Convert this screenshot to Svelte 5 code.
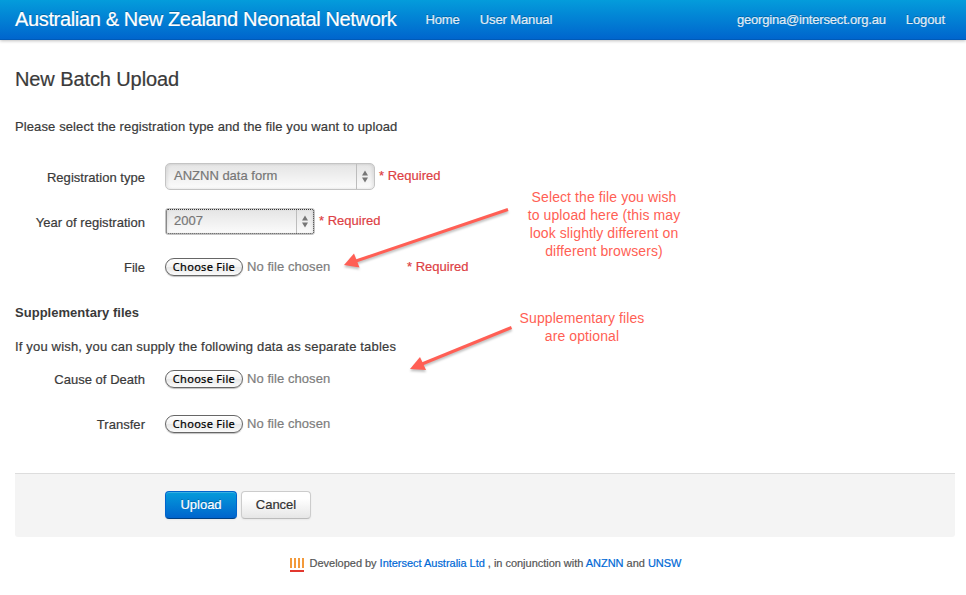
<script>
  const required = [
    { label: 'Registration type', value: 'ANZNN data form', width: 210, focused: false },
    { label: 'Year of registration', value: '2007', width: 150, focused: true }
  ];
  const supplementary = ['Cause of Death', 'Transfer'];
</script>

{#snippet fileInput()}
  <button class="choose" type="button">Choose File</button>
  <span class="nofile">No file chosen</span>
{/snippet}

<div class="page">
  <nav>
    <a class="brand" href="#top">Australian &amp; New Zealand Neonatal Network</a>
    <a class="home" href="#home">Home</a>
    <a class="manual" href="#manual">User Manual</a>
    <a class="user" href="#user">georgina@intersect.org.au</a>
    <a class="logout" href="#logout">Logout</a>
  </nav>

  <main>
    <h1>New Batch Upload</h1>
    <p class="intro">Please select the registration type and the file you want to upload</p>

    {#each required as field}
      <div class="row">
        <span class="label">{field.label}</span>
        <div class="select" class:focused={field.focused} style:width="{field.width}px">
          <span class="value">{field.value}</span>
          <svg class="steppers" width="18" height="25" viewBox="0 0 18 25">
            <path d="M.5 0v25" stroke="#bdbdbd" />
            <path d="M6 11.500l3-5 3 5zM6 13.500h6l-3 5z" fill="#777" />
          </svg>
        </div>
        <span class="required">* Required</span>
      </div>
    {/each}
    <div class="row">
      <span class="label">File</span>
      <div class="file">{@render fileInput()}</div>
      <span class="required low">* Required</span>
    </div>

    <h2>Supplementary files</h2>
    <p class="note">If you wish, you can supply the following data as separate tables</p>
    {#each supplementary as label}
      <div class="row">
        <span class="label">{label}</span>
        <div class="file">{@render fileInput()}</div>
      </div>
    {/each}

    <div class="actions">
      <button class="btn primary" type="button">Upload</button>
      <button class="btn" type="button">Cancel</button>
    </div>
  </main>

  <footer>
    <svg width="14" height="14" viewBox="0 0 14 14">
      <path d="M1 0v10M5 0v10M9 0v10M13 0v10" stroke="#f39a3b" stroke-width="2" />
      <path d="M0 13h14" stroke="#e2382f" stroke-width="2" />
    </svg>
    <span>Developed by <a href="#intersect">Intersect Australia Ltd</a> , in conjunction with <a href="#anznn">ANZNN</a> and <a href="#unsw">UNSW</a></span>
  </footer>

  <svg class="arrows" width="966" height="595" viewBox="0 0 966 595">
    <g fill="#ff5f55" stroke="#ff5f55">
      <path d="M508 209.500L356 261" stroke-width="3" />
      <path d="M344 265L354 253.500L359.500 267.500z" stroke="none" />
      <path d="M511.500 327.500L422 364" stroke-width="3" />
      <path d="M410 369L420 357L426 370z" stroke="none" />
    </g>
  </svg>
  <div class="callout first">Select the file you wish<br />to upload here (this may<br />look slightly different on<br />different browsers)</div>
  <div class="callout second">Supplementary files<br />are optional</div>
</div>

<style>
  :global(body) { background: #fff; }
  .page {
    position: relative;
    width: 966px;
    height: 595px;
    overflow: hidden;
    font: 13px/18px "Liberation Sans", Arial, sans-serif;
    color: #3a3a3a;
    white-space: nowrap;
    -webkit-text-stroke: .2px;
  }
  nav {
    display: flex;
    align-items: center;
    height: 40px;
    padding: 0 21px 1px 15px;
    box-sizing: border-box;
    background: linear-gradient(#049cdb, #0064cd);
    box-shadow: 0 1px 3px rgba(0, 0, 0, .25), inset 0 -1px 0 rgba(0, 0, 0, .1);
  }
  nav a { color: #e2edf6; text-decoration: none; text-shadow: 0 -1px 0 rgba(0, 0, 0, .25); letter-spacing: -.1px; }
  nav .brand { color: #fff; font-size: 20px; letter-spacing: -.35px; padding-bottom: 1px; }
  .home { margin-left: 29px; }
  .manual { margin-left: 20px; }
  nav .user { margin-left: auto; letter-spacing: -.18px; }
  .logout { margin-left: 20px; }
  main { padding: 0 11px 0 15px; }
  h1 { margin: 21px 0 0; font-size: 20px; line-height: 36px; font-weight: 400; letter-spacing: -.1px; }
  .intro { margin: 21px 0 27px; letter-spacing: .11px; }
  .row { display: flex; align-items: center; height: 27px; margin-bottom: 18px; }
  .label { width: 130px; margin-right: 20px; padding-top: 2px; text-align: right; letter-spacing: .03px; }
  .select {
    display: flex;
    align-items: center;
    justify-content: space-between;
    box-sizing: border-box;
    height: 27px;
    padding-left: 8px;
    border: 1px solid #c4c4c4;
    border-radius: 5px;
    background: linear-gradient(#e4e4e4, #fcfcfc);
    box-shadow: inset 2px 0 3px rgba(0, 0, 0, .07), inset -2px 0 3px rgba(0, 0, 0, .07);
    color: #777;
  }
  .select.focused { outline: 1px dotted #333; outline-offset: -2px; border-radius: 3px; }
  .value { padding-bottom: 2px; }
  .required { margin-left: 4px; padding-bottom: 2px; color: #dd4145; }
  .required.low { padding-bottom: 0; }
  .file { display: flex; align-items: center; width: 238px; padding-top: 1px; }
  .choose {
    box-sizing: border-box;
    width: 78px;
    height: 18px;
    padding: 0;
    border: 1px solid #666;
    border-radius: 9px;
    background: linear-gradient(#fff, #f3f3f3 48%, #e8e8e8 52%, #fafafa);
    box-shadow: 0 1px 1px rgba(0, 0, 0, .25);
    font: 400 11px/14px "Noto Sans", sans-serif;
    letter-spacing: .3px;
    color: #000;
  }
  .nofile { margin-left: 4px; padding-bottom: 1px; color: #7d7d7d; letter-spacing: .06px; }
  h2 { margin: 24px 0 0; font-size: 13px; line-height: 18px; letter-spacing: .03px; -webkit-text-stroke: 0; }
  .note { margin: 16px 0 9px; letter-spacing: .17px; }
  .actions {
    display: flex;
    gap: 4px;
    height: 64px;
    box-sizing: border-box;
    margin-top: 36px;
    padding: 17px 0 0 150px;
    border-top: 1px solid #ddd;
    border-radius: 0 0 3px 3px;
    background: #f4f4f4;
  }
  .btn {
    box-sizing: border-box;
    width: 70px;
    height: 28px;
    padding: 0;
    border: 1px solid #ccc;
    border-bottom-color: #bbb;
    border-radius: 4px;
    background: linear-gradient(#fff, #fff 25%, #e6e6e6);
    box-shadow: inset 0 1px 0 rgba(255, 255, 255, .2), 0 1px 2px rgba(0, 0, 0, .05);
    font: 13px/18px "Liberation Sans", Arial, sans-serif;
    color: #333;
    -webkit-text-stroke: .2px;
  }
  .primary {
    width: 72px;
    border-color: #0064cd #0064cd #003f81;
    background: linear-gradient(#049cdb, #0064cd);
    color: #fff;
    text-shadow: 0 -1px 0 rgba(0, 0, 0, .25);
  }
  footer { display: flex; align-items: center; justify-content: center; gap: 6px; margin-top: 17px; padding-left: 5px; font-size: 11px; color: #555; letter-spacing: -.025px; }
  footer svg { margin-top: 4px; }
  footer a { color: #0069d6; text-decoration: none; }
  .arrows { position: absolute; left: 0; top: 0; pointer-events: none; filter: drop-shadow(0 2px 1px rgba(0, 0, 0, .25)); }
  .callout { position: absolute; text-align: center; font-size: 14px; color: #ff5f55; letter-spacing: .1px; -webkit-text-stroke: 0; }
  .first { left: 504px; top: 188px; width: 200px; }
  .second { left: 482px; top: 309px; width: 200px; }
</style>
